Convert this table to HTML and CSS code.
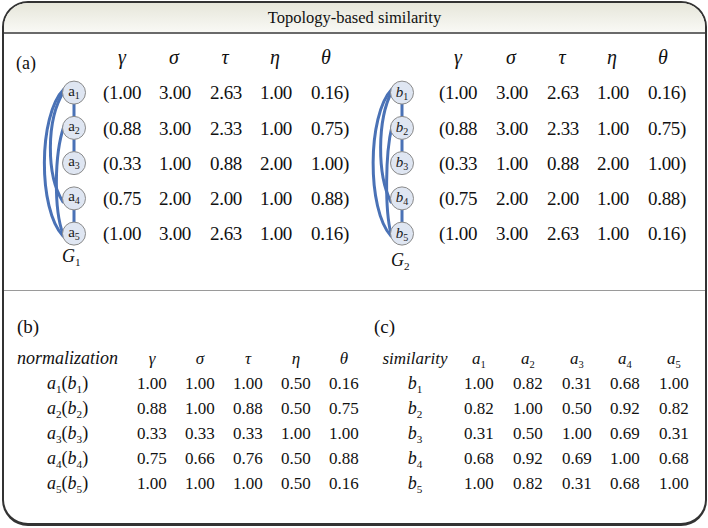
FILE: index.html
```html
<!DOCTYPE html>
<html>
<head>
<meta charset="utf-8">
<link rel="stylesheet" href="styles.css">
</head>
<body>
<div class="frame">
  <div class="head"><span class="title">Topology-based similarity</span></div>
  <div class="top">
    <div class="panel pa">
      <div class="tag">(a)</div>
      <div class="gh first">γ</div>
      <div class="gh">σ</div>
      <div class="gh">τ</div>
      <div class="gh">η</div>
      <div class="gh">θ</div>
      <svg class="graph" width="99" height="176" viewBox="0 0 99 176">
        <g class="edges">
          <line x1="70" y1="29" x2="70" y2="42"/>
          <line x1="70" y1="64" x2="70" y2="77"/>
          <line x1="70" y1="135" x2="70" y2="147"/>
          <path d="M60,14 C34,40 34,135 59,161"/>
          <path d="M60,16 C42,45 42,100 59,127"/>
          <path d="M60,51 C50,80 50,135 59,159"/>
        </g>
        <g class="nodes">
          <circle cx="70" cy="17.6" r="11.5"/>
          <circle cx="70" cy="52.9" r="11.5"/>
          <circle cx="70" cy="88.1" r="11.5"/>
          <circle cx="70" cy="123.4" r="11.5"/>
          <circle cx="70" cy="158.6" r="11.5"/>
        </g>
        <text class="nl" x="70" y="20.6">a<tspan class="ns" dy="3">1</tspan></text>
        <text class="nl" x="70" y="55.9">a<tspan class="ns" dy="3">2</tspan></text>
        <text class="nl" x="70" y="91.1">a<tspan class="ns" dy="3">3</tspan></text>
        <text class="nl" x="70" y="126.4">a<tspan class="ns" dy="3">4</tspan></text>
        <text class="nl" x="70" y="161.6">a<tspan class="ns" dy="3">5</tspan></text>
      </svg>
      <div class="v">(1.00</div><div class="v">3.00</div><div class="v">2.63</div><div class="v">1.00</div><div class="v">0.16)</div>
      <div class="v">(0.88</div><div class="v">3.00</div><div class="v">2.33</div><div class="v">1.00</div><div class="v">0.75)</div>
      <div class="v">(0.33</div><div class="v">1.00</div><div class="v">0.88</div><div class="v">2.00</div><div class="v">1.00)</div>
      <div class="v">(0.75</div><div class="v">2.00</div><div class="v">2.00</div><div class="v">1.00</div><div class="v">0.88)</div>
      <div class="v">(1.00</div><div class="v">3.00</div><div class="v">2.63</div><div class="v">1.00</div><div class="v">0.16)</div>
      <div class="glabel"><i>G</i><sub>1</sub></div>
    </div>
    <div class="panel pb">
      <div class="tag"></div>
      <div class="gh first">γ</div>
      <div class="gh">σ</div>
      <div class="gh">τ</div>
      <div class="gh">η</div>
      <div class="gh">θ</div>
      <svg class="graph" width="85" height="176" viewBox="0 0 85 176">
        <g class="edges">
          <line x1="48" y1="29" x2="48" y2="42"/>
          <line x1="48" y1="64" x2="48" y2="77"/>
          <line x1="48" y1="135" x2="48" y2="147"/>
          <path d="M38,14 C13,40 13,135 37,161"/>
          <path d="M38,16 C23,45 23,100 37,127"/>
          <path d="M38,51 C31,80 31,135 37,159"/>
        </g>
        <g class="nodes">
          <circle cx="48" cy="17.6" r="11.5"/>
          <circle cx="48" cy="52.9" r="11.5"/>
          <circle cx="48" cy="88.1" r="11.5"/>
          <circle cx="48" cy="123.4" r="11.5"/>
          <circle cx="48" cy="158.6" r="11.5"/>
        </g>
        <text class="nl it" x="48" y="21.6">b<tspan class="ns" dy="3">1</tspan></text>
        <text class="nl it" x="48" y="56.9">b<tspan class="ns" dy="3">2</tspan></text>
        <text class="nl it" x="48" y="92.1">b<tspan class="ns" dy="3">3</tspan></text>
        <text class="nl it" x="48" y="127.4">b<tspan class="ns" dy="3">4</tspan></text>
        <text class="nl it" x="48" y="162.6">b<tspan class="ns" dy="3">5</tspan></text>
      </svg>
      <div class="v">(1.00</div><div class="v">3.00</div><div class="v">2.63</div><div class="v">1.00</div><div class="v">0.16)</div>
      <div class="v">(0.88</div><div class="v">3.00</div><div class="v">2.33</div><div class="v">1.00</div><div class="v">0.75)</div>
      <div class="v">(0.33</div><div class="v">1.00</div><div class="v">0.88</div><div class="v">2.00</div><div class="v">1.00)</div>
      <div class="v">(0.75</div><div class="v">2.00</div><div class="v">2.00</div><div class="v">1.00</div><div class="v">0.88)</div>
      <div class="v">(1.00</div><div class="v">3.00</div><div class="v">2.63</div><div class="v">1.00</div><div class="v">0.16)</div>
      <div class="glabel"><i>G</i><sub>2</sub></div>
    </div>
  </div>
  <div class="bottom">
    <div class="bpanel bl">
      <div class="tag2">(b)</div>
      <div class="tbl tb">
        <div class="rh"><i>normalization</i></div>
        <div class="bh">γ</div><div class="bh">σ</div><div class="bh">τ</div><div class="bh">η</div><div class="bh">θ</div>
        <div class="rl"><i>a</i><sub>1</sub>(<i>b</i><sub>1</sub>)</div>
        <div class="c">1.00</div><div class="c">1.00</div><div class="c">1.00</div><div class="c">0.50</div><div class="c">0.16</div>
        <div class="rl"><i>a</i><sub>2</sub>(<i>b</i><sub>2</sub>)</div>
        <div class="c">0.88</div><div class="c">1.00</div><div class="c">0.88</div><div class="c">0.50</div><div class="c">0.75</div>
        <div class="rl"><i>a</i><sub>3</sub>(<i>b</i><sub>3</sub>)</div>
        <div class="c">0.33</div><div class="c">0.33</div><div class="c">0.33</div><div class="c">1.00</div><div class="c">1.00</div>
        <div class="rl"><i>a</i><sub>4</sub>(<i>b</i><sub>4</sub>)</div>
        <div class="c">0.75</div><div class="c">0.66</div><div class="c">0.76</div><div class="c">0.50</div><div class="c">0.88</div>
        <div class="rl"><i>a</i><sub>5</sub>(<i>b</i><sub>5</sub>)</div>
        <div class="c">1.00</div><div class="c">1.00</div><div class="c">1.00</div><div class="c">0.50</div><div class="c">0.16</div>
      </div>
    </div>
    <div class="bpanel br">
      <div class="tag2">(c)</div>
      <div class="tbl tc">
        <div class="sh"><i>similarity</i></div>
        <div class="bh ah"><i>a</i><sub>1</sub></div><div class="bh ah"><i>a</i><sub>2</sub></div><div class="bh ah"><i>a</i><sub>3</sub></div><div class="bh ah"><i>a</i><sub>4</sub></div><div class="bh ah"><i>a</i><sub>5</sub></div>
        <div class="sl"><i>b</i><sub>1</sub></div>
        <div class="c">1.00</div><div class="c">0.82</div><div class="c">0.31</div><div class="c">0.68</div><div class="c">1.00</div>
        <div class="sl"><i>b</i><sub>2</sub></div>
        <div class="c">0.82</div><div class="c">1.00</div><div class="c">0.50</div><div class="c">0.92</div><div class="c">0.82</div>
        <div class="sl"><i>b</i><sub>3</sub></div>
        <div class="c">0.31</div><div class="c">0.50</div><div class="c">1.00</div><div class="c">0.69</div><div class="c">0.31</div>
        <div class="sl"><i>b</i><sub>4</sub></div>
        <div class="c">0.68</div><div class="c">0.92</div><div class="c">0.69</div><div class="c">1.00</div><div class="c">0.68</div>
        <div class="sl"><i>b</i><sub>5</sub></div>
        <div class="c">1.00</div><div class="c">0.82</div><div class="c">0.31</div><div class="c">0.68</div><div class="c">1.00</div>
      </div>
    </div>
  </div>
</div>
</body>
</html>
```
FILE: styles.css
```css
* { box-sizing: border-box; }
html, body { margin: 0; padding: 0; background: #ffffff; }
body {
  font-family: "Liberation Serif", Tinos, "Times New Roman", Times, "DejaVu Serif", serif;
  color: #111111;
}
.frame {
  margin: 1px 0 0 2px;
  width: 705px;
  height: 525px;
  border: 2px solid #333333;
  border-bottom-width: 3px;
  border-radius: 26px;
  overflow: hidden;
  background: #ffffff;
}
.head {
  height: 31px;
  border-bottom: 2px solid #6a6a6a;
  background: linear-gradient(to bottom, #e6e6da, #f9f9f5);
  display: flex;
  align-items: center;
  justify-content: center;
}
.title {
  font-size: 16.5px;
  line-height: 20px;
  white-space: nowrap;
}
.top {
  height: 257px;
  border-bottom: 1px solid #9a9a9a;
  padding-top: 6px;
  display: grid;
  grid-template-columns: 350px 1fr;
}
.panel {
  display: grid;
  grid-template-rows: repeat(6, 35.25px) auto;
}
.pa { grid-template-columns: 99px 56px 51px 50px 51px 1fr; }
.pb { grid-template-columns: 85px 57px 51px 50px 51px 1fr; }
.tag {
  align-self: end;
  font-size: 18px;
  line-height: 20px;
  padding-left: 12px;
  margin-bottom: 2px;
}
.gh {
  font-size: 20px;
  font-style: italic;
  line-height: 35.25px;
  width: 30px;
  text-align: center;
}
.gh.first { width: 38px; }
.graph {
  grid-column: 1;
  grid-row: 2 / 7;
  display: block;
  overflow: visible;
}
.edges line, .edges path {
  stroke: #4a72b6;
  stroke-width: 3;
  fill: none;
  stroke-linecap: round;
}
.nodes circle {
  fill: #dfe6f2;
  stroke: #8a8a8a;
  stroke-width: 1;
}
.nl {
  font-family: "Liberation Serif", Tinos, "Times New Roman", "DejaVu Serif", serif;
  font-size: 15px;
  fill: #1a1a1a;
  text-anchor: middle;
}
.nl.it { font-style: italic; }
.ns { font-size: 10px; font-style: normal; }
.v {
  font-size: 19px;
  line-height: 35.25px;
  letter-spacing: -0.3px;
  white-space: nowrap;
}
.glabel {
  grid-column: 1;
  justify-self: start;
  font-size: 18px;
  line-height: 18px;
  margin-top: -5px;
}
.pa .glabel { margin-left: 58px; }
.pb .glabel { margin-left: 37px; margin-top: -1px; }
sub {
  font-size: 0.62em;
  vertical-align: -0.35em;
  line-height: 0;
}
.bottom {
  display: grid;
  grid-template-columns: 370px 1fr;
  padding-top: 25px;
}
.bl { padding-left: 13px; }
.tag2 {
  font-size: 19px;
  line-height: 22px;
  margin-bottom: 8px;
}
.tbl {
  display: grid;
  grid-auto-rows: 25px;
  align-items: center;
}
.tb { grid-template-columns: 120px 48px 48px 48px 48px 48px; }
.tc { grid-template-columns: 90px 49px 49px 48px 49px 48px; }
.rh { font-size: 18px; white-space: nowrap; }
.bh {
  font-size: 17px;
  font-style: italic;
  width: 30px;
  text-align: center;
}
.ah { font-style: normal; }
.rl {
  font-size: 18px;
  padding-left: 30px;
  white-space: nowrap;
}
.c { font-size: 17px; }
.sh, .sl {
  font-size: 17px;
  text-align: center;
  padding-right: 8px;
  white-space: nowrap;
}
.sl { font-size: 18px; }
```
